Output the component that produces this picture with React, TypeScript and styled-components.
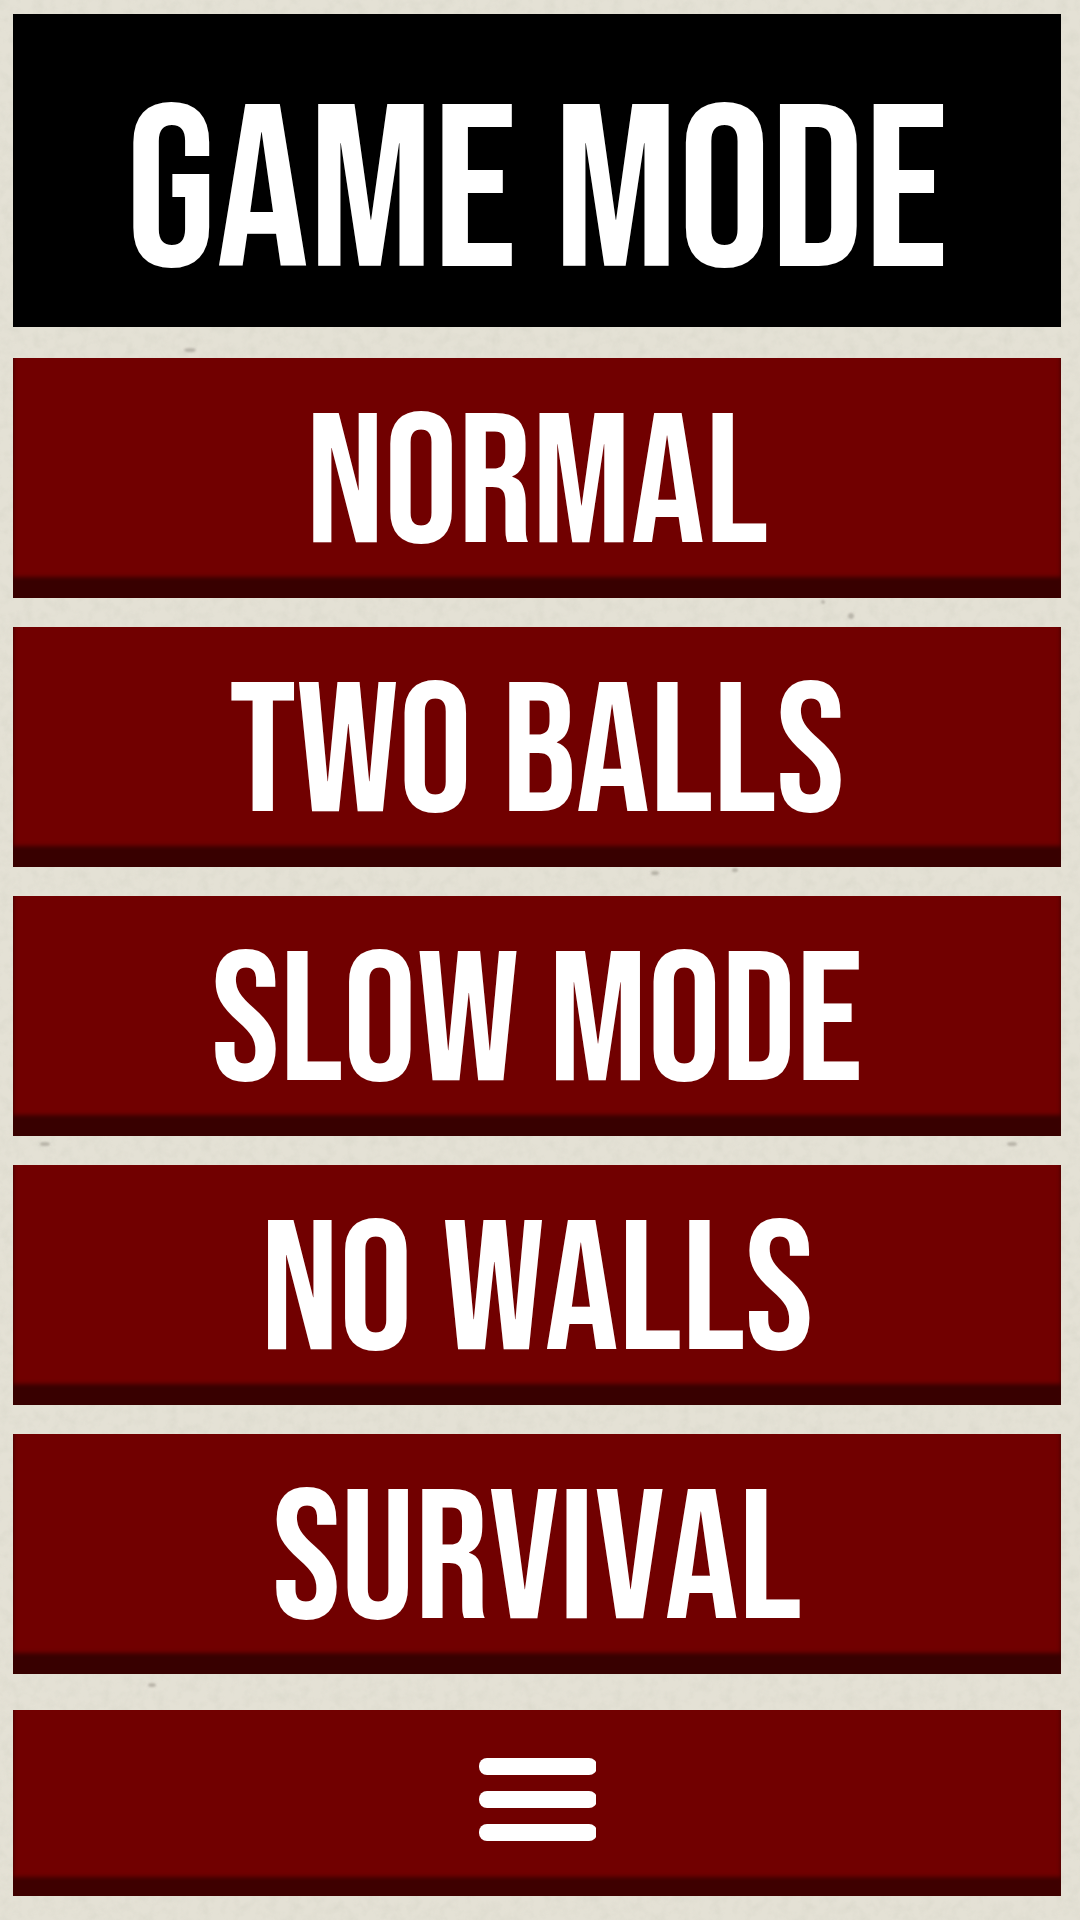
import React from 'react';
import styled, { createGlobalStyle } from 'styled-components';

const paper = encodeURIComponent(
  `<svg xmlns="http://www.w3.org/2000/svg" width="512" height="512">
    <filter id="p" x="0" y="0" width="100%" height="100%">
      <feTurbulence type="fractalNoise" baseFrequency="0.09" numOctaves="3" seed="4" stitchTiles="stitch"/>
      <feColorMatrix values="0 0 0 0 0.68  0 0 0 0 0.67  0 0 0 0 0.58  1.1 0 0 0 -0.45"/>
    </filter>
    <rect width="512" height="512" filter="url(#p)"/>
  </svg>`
);

const specks = encodeURIComponent(
  `<svg xmlns="http://www.w3.org/2000/svg" width="1080" height="1920" fill="#77746a" fill-opacity="0.4">
    <filter id="s"><feGaussianBlur stdDeviation="1"/></filter>
    <g filter="url(#s)">
      <ellipse cx="190" cy="350" rx="6" ry="2"/>
      <ellipse cx="823" cy="602" rx="2" ry="2"/>
      <ellipse cx="851" cy="616" rx="3" ry="3"/>
      <ellipse cx="655" cy="873" rx="4" ry="2"/>
      <ellipse cx="735" cy="870" rx="3" ry="2"/>
      <ellipse cx="45" cy="1144" rx="5" ry="2"/>
      <ellipse cx="1012" cy="1144" rx="5" ry="2"/>
      <ellipse cx="152" cy="1685" rx="4" ry="2"/>
    </g>
  </svg>`
);

const GlobalStyle = createGlobalStyle`
  *, *::before, *::after { box-sizing: border-box; }
  body {
    margin: 0;
    min-height: 100vh;
    background:
      url("data:image/svg+xml,${specks}") no-repeat,
      url("data:image/svg+xml,${paper}"),
      #e4e1d5;
    font-family: "Bebas Neue", "Roboto Condensed", "Open Sans Condensed", sans-serif;
    font-kerning: none;
    color: #fff;
  }
`;

const Screen = styled.main`
  display: flex;
  flex-direction: column;
  gap: 36px;
  padding: 14px 19px 24px 13px;
`;

const Menu = styled.section`
  display: flex;
  flex-direction: column;
  gap: 31px;
`;

const Title = styled.h1`
  margin: 0;
  padding: 53px 0 0;
  background: #000;
  font-size: 231px;
  font-weight: 400;
  line-height: 260px;
  text-align: center;
`;

const Modes = styled.div`
  display: flex;
  flex-direction: column;
  gap: 29px;
`;

const Button = styled.button<{ $lip: number; $lipColor: string }>`
  display: flex;
  align-items: center;
  justify-content: center;
  width: 100%;
  border: 0;
  border-radius: 0;
  background: #710000;
  box-shadow: inset 0 -${p => p.$lip}px 4px ${p => p.$lipColor};
  color: inherit;
  font-family: inherit;
  font-kerning: inherit;
  cursor: pointer;
`;

const ModeButton = styled(Button)`
  padding: 18px 0 0;
  font-size: 184px;
  line-height: 222px;
`;

const MenuButton = styled(Button)`
  padding: 48px 0 55px;
`;

const MenuIcon = styled.svg`
  display: block;
  width: 118px;
  height: 83px;
  fill: #fff;
`;

const modes = ['NORMAL', 'TWO BALLS', 'SLOW MODE', 'NO WALLS', 'SURVIVAL'];

export default function App() {
  return (
    <>
      <GlobalStyle />
      <Screen>
        <Menu>
          <Title>GAME MODE</Title>
          <Modes>
            {modes.map(mode => (
              <ModeButton key={mode} type="button" $lip={21} $lipColor="#380000">
                {mode}
              </ModeButton>
            ))}
          </Modes>
        </Menu>
        <MenuButton type="button" aria-label="Menu" $lip={19} $lipColor="#3e0000">
          <MenuIcon viewBox="0 0 118 83" aria-hidden="true">
            <rect x="1" y="0" width="118" height="17" rx="8" />
            <rect x="1" y="33" width="118" height="17" rx="8" />
            <rect x="1" y="66" width="118" height="17" rx="8" />
          </MenuIcon>
        </MenuButton>
      </Screen>
    </>
  );
}
